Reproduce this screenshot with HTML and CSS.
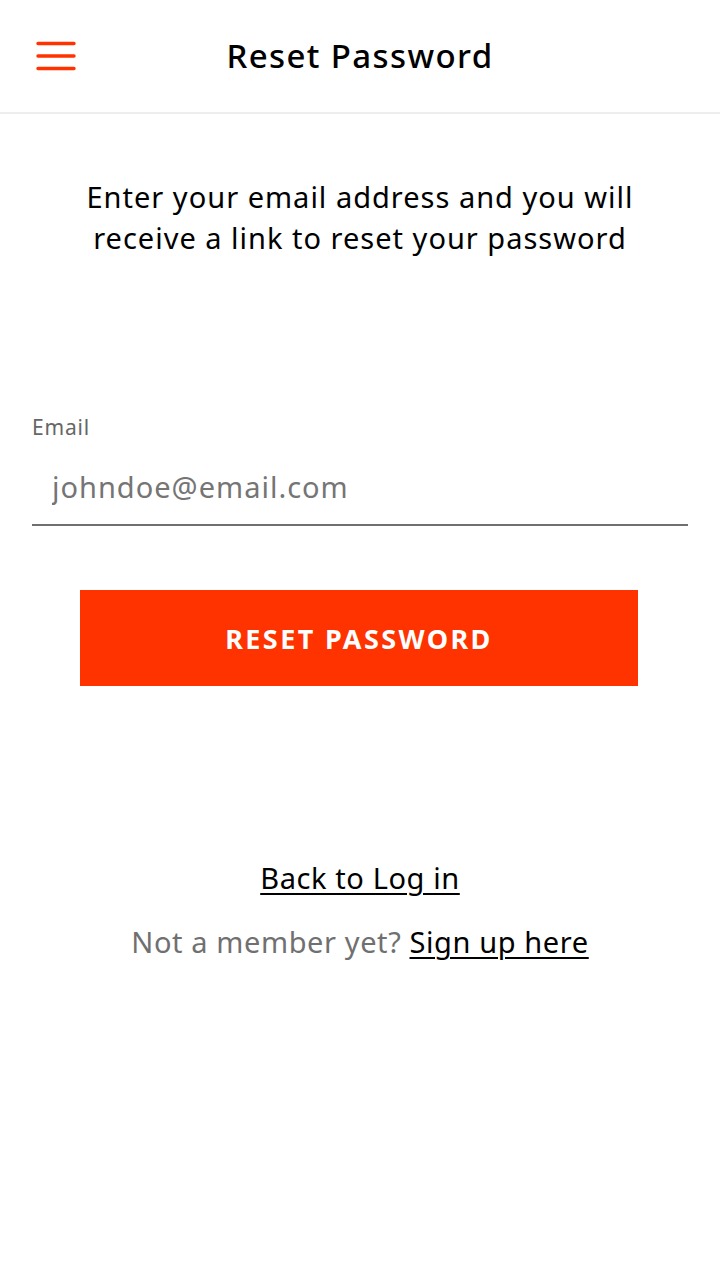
FILE: index.html
```html
<!DOCTYPE html>
<html lang="en">
<head>
<meta charset="utf-8">
<title>Reset Password</title>
<link rel="stylesheet" href="styles.css">
</head>
<body>
<header class="topbar">
  <button class="menu-btn" aria-label="Menu">
    <svg width="40" height="30" viewBox="0 0 40 30">
      <path d="M2 2.5H38M2 15H38M2 27.5H38" stroke="#ff3300" stroke-width="3.4" stroke-linecap="round" fill="none"/>
    </svg>
  </button>
  <h1 class="title">Reset Password</h1>
</header>
<main class="content">
  <p class="intro">Enter your email address and you will receive a link to reset your password</p>
  <form class="form">
    <label class="field">
      <span class="field-label">Email</span>
      <input class="field-input" type="email" placeholder="johndoe@email.com">
    </label>
    <button class="primary-btn" type="button">RESET PASSWORD</button>
  </form>
  <div class="links">
    <a class="link" href="#">Back to Log in</a>
    <p class="signup"><span class="muted">Not a member yet?</span> <a class="link" href="#">Sign up here</a></p>
  </div>
</main>
</body>
</html>
```
FILE: styles.css
```css
* { box-sizing: border-box; }
html, body {
  margin: 0;
  padding: 0;
  background: #fff;
  font-family: "Noto Sans", "Open Sans", sans-serif;
  color: #000;
}
.topbar {
  height: 114px;
  border-bottom: 2px solid #eeeeee;
  display: flex;
  align-items: center;
  justify-content: center;
  position: relative;
}
.menu-btn {
  position: absolute;
  left: 36px;
  top: 41px;
  background: none;
  border: 0;
  padding: 0;
  width: 40px;
  height: 30px;
  display: block;
}
.menu-btn svg { display: block; }
.title {
  margin: 0;
  font-size: 33px;
  font-weight: 500;
  letter-spacing: 1.4px;
  padding-bottom: 2px;
}
.content {
  padding: 62px 32px 0;
  display: flex;
  flex-direction: column;
}
.intro {
  margin: 0 auto;
  width: 570px;
  text-align: center;
  font-size: 29px;
  line-height: 41px;
  letter-spacing: 1px;
}
.form {
  margin-top: 155px;
  display: flex;
  flex-direction: column;
}
.field {
  display: flex;
  flex-direction: column;
}
.field-label {
  font-size: 21px;
  color: #666;
  line-height: 28px;
  letter-spacing: 0.8px;
}
.field-input {
  margin-top: 17px;
  border: 0;
  border-bottom: 2px solid #707070;
  height: 68px;
  padding: 0 0 10px 20px;
  font-family: inherit;
  font-size: 29px;
  letter-spacing: 1px;
  color: #333;
  outline: none;
  background: transparent;
}
.field-input::placeholder { color: #757575; }
.primary-btn {
  margin: 64px 0 0 48px;
  width: 558px;
  height: 96px;
  background: #ff3300;
  color: #fff;
  border: 0;
  font-family: inherit;
  font-size: 27px;
  font-weight: 700;
  letter-spacing: 2.4px;
  padding: 0;
}
.links {
  margin-top: 172px;
  display: flex;
  flex-direction: column;
  align-items: center;
}
.link {
  color: #000;
  font-size: 29px;
  letter-spacing: 0.6px;
  text-decoration: underline;
  text-underline-offset: 4px;
  text-decoration-thickness: 2px;
  line-height: 40px;
}
.signup {
  margin: 24px 0 0;
  font-size: 29px;
  letter-spacing: 0.6px;
  line-height: 40px;
}
.muted { color: #707070; }
```
